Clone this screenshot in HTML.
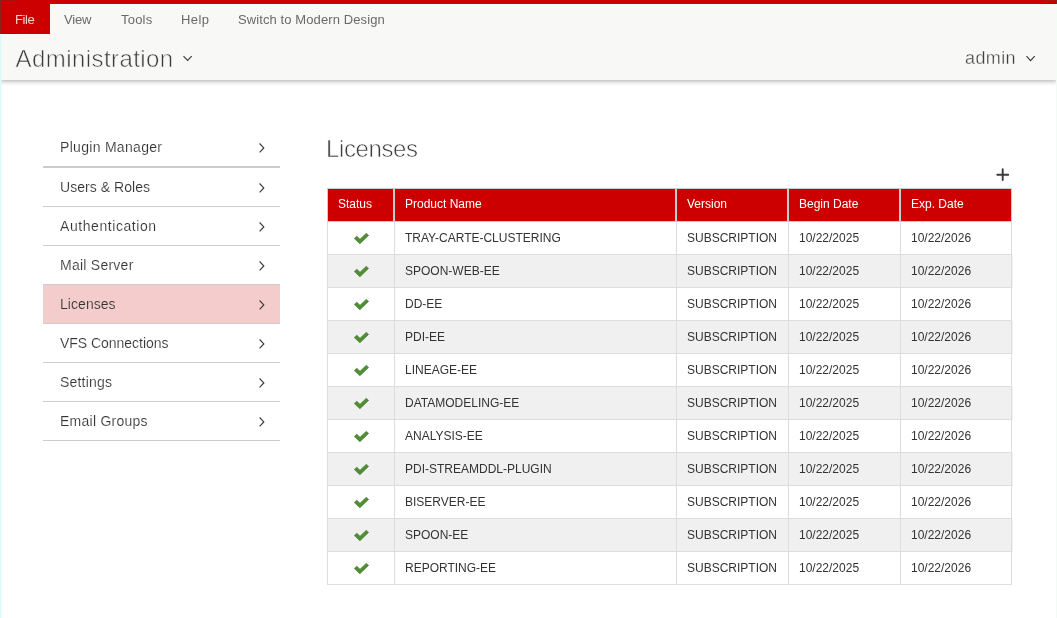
<!DOCTYPE html>
<html lang="en">
<head>
<meta charset="utf-8">
<title>Administration - Licenses</title>
<style>
html,body{margin:0;padding:0;}
body{width:1057px;height:618px;overflow:hidden;background:#fff;position:relative;font-family:"Liberation Sans",sans-serif;color:#333;}
*{box-sizing:border-box;}
.abs{position:absolute;white-space:nowrap;}
#page{position:absolute;left:0;top:0;width:1057px;height:618px;will-change:transform;}
#edge{left:0;top:35px;width:2px;height:583px;background:linear-gradient(90deg,#d6fbf8 0,#d6fbf8 1px,rgba(225,250,248,.35) 1px,rgba(225,250,248,.35) 2px);}
#redge{left:1056px;top:5px;width:1px;height:613px;background:#f3fcf4;}
#wline{left:0;top:4px;width:1057px;height:1px;background:#fdffff;}
.dk{background:#a81212;height:1px;}
.dkv{background:#8b2020;width:1px;}
#header{left:0;top:0;width:1057px;height:80px;background:#f8f8f6;border-top:4px solid #cc0000;box-shadow:0 1px 5px rgba(0,0,0,.35);}
#filetab{left:0;top:4px;width:51px;height:31px;background:#cc0000;border-right:1px solid #fff;border-bottom:1px solid #fff;}
.menu{top:11px;font-size:13px;line-height:18px;color:#6a6a6a;}
#m-file{left:15px;color:rgba(255,255,255,.82);letter-spacing:-.4px;}
#title{left:15.6px;top:41px;font-size:24px;line-height:36px;color:#3c3c3c;letter-spacing:.42px;-webkit-text-stroke:.6px #f8f8f6;}
#user{left:965px;top:45px;font-size:18px;line-height:26px;color:#404040;letter-spacing:.4px;-webkit-text-stroke:.35px #f8f8f6;}
.chev{fill:none;stroke:#3c3c3c;stroke-width:1.2;}
/* sidebar */
#side{left:43px;top:128px;width:237px;}
.item{position:relative;height:39px;border-bottom:1px solid #ccc;font-size:14px;line-height:38px;padding-left:17px;color:#333;-webkit-text-stroke:.15px #fff;}
.item.first{height:40px;border-bottom:2px solid #ccc;}
.item.sel{background:#f4cccc;-webkit-text-stroke-color:#f4cccc;}
.item svg{position:absolute;left:215px;top:13.6px;}
/* content */
#h1{left:326px;top:131px;font-size:24px;line-height:36px;color:#3c3c3c;letter-spacing:-.4px;-webkit-text-stroke:.6px #fff;}
#plus{left:996px;top:168px;}
#thead{left:327px;top:188px;width:685px;height:34px;display:flex;font-size:12px;}
#thead div{height:34px;background:#cc0000;color:#fff;border:1px solid #ccc;padding:0 0 1px 10px;line-height:31px;flex:none;}
table{position:absolute;left:327px;top:222px;border-collapse:separate;border-spacing:0;font-size:12px;table-layout:fixed;width:685px;border-left:1px solid #ddd;}
td{height:33px;padding:0 0 1px 10px;border-right:1px solid #ddd;border-bottom:1px solid #ddd;color:#333;}
tbody tr:nth-child(even) td{background:#f0f0f0;}
tbody tr:nth-child(even) td:last-child{box-shadow:1px 0 0 #f2f2f2;}
td.st{padding:0;}
td.st svg{display:block;margin:0 0 0 24px;}
</style>
</head>
<body>
<div id="page">
<div id="header" class="abs"></div>
<div id="wline" class="abs"></div>
<div id="filetab" class="abs"></div>
<div class="abs dk" style="left:0;top:0;width:17px"></div><div class="abs dk" style="left:0;top:33px;width:17px;background:#a80808"></div><div class="abs dkv" style="left:0;top:0;height:34px"></div>
<div class="abs dk" style="left:1044px;top:0;width:13px"></div><div class="abs dk" style="left:1044px;top:3px;width:13px;background:#a80808"></div><div class="abs dkv" style="left:1056px;top:0;height:4px"></div>
<div id="redge" class="abs"></div>
<span class="abs menu" id="m-file">File</span>
<span class="abs menu" style="left:64px;letter-spacing:-.2px">View</span>
<span class="abs menu" style="left:121px;letter-spacing:.2px">Tools</span>
<span class="abs menu" style="left:181px;letter-spacing:.4px">Help</span>
<span class="abs menu" style="left:238px;letter-spacing:.1px">Switch to Modern Design</span>
<div id="edge" class="abs"></div>
<span id="title" class="abs">Administration</span>
<svg class="abs" style="left:182px;top:54px" width="12" height="9" viewBox="0 0 12 9"><path class="chev" d="M1.5 2.2 L5.6 6.3 L9.7 2.2"/></svg>
<span id="user" class="abs">admin</span>
<svg class="abs" style="left:1025px;top:54px" width="12" height="9" viewBox="0 0 12 9"><path class="chev" d="M1.5 2.2 L5.6 6.6 L9.7 2.2"/></svg>

<div id="side" class="abs">
  <div class="item first" style="letter-spacing:0.3px">Plugin Manager<svg width="8" height="12" viewBox="0 0 8 12"><path class="chev" d="M1.6 1.5 L5.8 5.9 L1.6 10.3"/></svg></div>
  <div class="item" style="letter-spacing:0.05px">Users &amp; Roles<svg width="8" height="12" viewBox="0 0 8 12"><path class="chev" d="M1.6 1.5 L5.8 5.9 L1.6 10.3"/></svg></div>
  <div class="item" style="letter-spacing:0.57px">Authentication<svg width="8" height="12" viewBox="0 0 8 12"><path class="chev" d="M1.6 1.5 L5.8 5.9 L1.6 10.3"/></svg></div>
  <div class="item" style="letter-spacing:0.25px">Mail Server<svg width="8" height="12" viewBox="0 0 8 12"><path class="chev" d="M1.6 1.5 L5.8 5.9 L1.6 10.3"/></svg></div>
  <div class="item sel" style="letter-spacing:0.05px">Licenses<svg width="8" height="12" viewBox="0 0 8 12"><path class="chev" d="M1.6 1.5 L5.8 5.9 L1.6 10.3"/></svg></div>
  <div class="item" style="letter-spacing:-0.03px">VFS Connections<svg width="8" height="12" viewBox="0 0 8 12"><path class="chev" d="M1.6 1.5 L5.8 5.9 L1.6 10.3"/></svg></div>
  <div class="item" style="letter-spacing:0.2px">Settings<svg width="8" height="12" viewBox="0 0 8 12"><path class="chev" d="M1.6 1.5 L5.8 5.9 L1.6 10.3"/></svg></div>
  <div class="item" style="letter-spacing:0.25px">Email Groups<svg width="8" height="12" viewBox="0 0 8 12"><path class="chev" d="M1.6 1.5 L5.8 5.9 L1.6 10.3"/></svg></div>
</div>

<span id="h1" class="abs">Licenses</span>
<svg id="plus" class="abs" width="14" height="14" viewBox="0 0 14 14"><path d="M1.3 6.7 H12.2 M6.7 1.3 V12" stroke="#3a3a3a" stroke-width="1.9" stroke-linecap="round" fill="none"/></svg>

<div id="thead" class="abs"><div style="width:67px">Status</div><div style="width:282px">Product Name</div><div style="width:112px">Version</div><div style="width:112px">Begin Date</div><div style="width:112px">Exp. Date</div></div>
<table>
<colgroup><col style="width:67px"><col style="width:282px"><col style="width:112px"><col style="width:112px"><col style="width:111px"></colgroup>
<tbody>
<tr><td class="st"><svg width="18" height="14" viewBox="0 0 18 14"><path d="M2.3 7.5 L4.8 5.2 L8 8.3 L14.3 2.3 L16.6 4.4 L7.9 12.8 Z" fill="#508d36" stroke="#488531" stroke-width=".7" stroke-linejoin="round"/></svg></td><td>TRAY-CARTE-CLUSTERING</td><td>SUBSCRIPTION</td><td>10/22/2025</td><td>10/22/2026</td></tr>
<tr><td class="st"><svg width="18" height="14" viewBox="0 0 18 14"><path d="M2.3 7.5 L4.8 5.2 L8 8.3 L14.3 2.3 L16.6 4.4 L7.9 12.8 Z" fill="#508d36" stroke="#488531" stroke-width=".7" stroke-linejoin="round"/></svg></td><td>SPOON-WEB-EE</td><td>SUBSCRIPTION</td><td>10/22/2025</td><td>10/22/2026</td></tr>
<tr><td class="st"><svg width="18" height="14" viewBox="0 0 18 14"><path d="M2.3 7.5 L4.8 5.2 L8 8.3 L14.3 2.3 L16.6 4.4 L7.9 12.8 Z" fill="#508d36" stroke="#488531" stroke-width=".7" stroke-linejoin="round"/></svg></td><td>DD-EE</td><td>SUBSCRIPTION</td><td>10/22/2025</td><td>10/22/2026</td></tr>
<tr><td class="st"><svg width="18" height="14" viewBox="0 0 18 14"><path d="M2.3 7.5 L4.8 5.2 L8 8.3 L14.3 2.3 L16.6 4.4 L7.9 12.8 Z" fill="#508d36" stroke="#488531" stroke-width=".7" stroke-linejoin="round"/></svg></td><td>PDI-EE</td><td>SUBSCRIPTION</td><td>10/22/2025</td><td>10/22/2026</td></tr>
<tr><td class="st"><svg width="18" height="14" viewBox="0 0 18 14"><path d="M2.3 7.5 L4.8 5.2 L8 8.3 L14.3 2.3 L16.6 4.4 L7.9 12.8 Z" fill="#508d36" stroke="#488531" stroke-width=".7" stroke-linejoin="round"/></svg></td><td>LINEAGE-EE</td><td>SUBSCRIPTION</td><td>10/22/2025</td><td>10/22/2026</td></tr>
<tr><td class="st"><svg width="18" height="14" viewBox="0 0 18 14"><path d="M2.3 7.5 L4.8 5.2 L8 8.3 L14.3 2.3 L16.6 4.4 L7.9 12.8 Z" fill="#508d36" stroke="#488531" stroke-width=".7" stroke-linejoin="round"/></svg></td><td>DATAMODELING-EE</td><td>SUBSCRIPTION</td><td>10/22/2025</td><td>10/22/2026</td></tr>
<tr><td class="st"><svg width="18" height="14" viewBox="0 0 18 14"><path d="M2.3 7.5 L4.8 5.2 L8 8.3 L14.3 2.3 L16.6 4.4 L7.9 12.8 Z" fill="#508d36" stroke="#488531" stroke-width=".7" stroke-linejoin="round"/></svg></td><td>ANALYSIS-EE</td><td>SUBSCRIPTION</td><td>10/22/2025</td><td>10/22/2026</td></tr>
<tr><td class="st"><svg width="18" height="14" viewBox="0 0 18 14"><path d="M2.3 7.5 L4.8 5.2 L8 8.3 L14.3 2.3 L16.6 4.4 L7.9 12.8 Z" fill="#508d36" stroke="#488531" stroke-width=".7" stroke-linejoin="round"/></svg></td><td>PDI-STREAMDDL-PLUGIN</td><td>SUBSCRIPTION</td><td>10/22/2025</td><td>10/22/2026</td></tr>
<tr><td class="st"><svg width="18" height="14" viewBox="0 0 18 14"><path d="M2.3 7.5 L4.8 5.2 L8 8.3 L14.3 2.3 L16.6 4.4 L7.9 12.8 Z" fill="#508d36" stroke="#488531" stroke-width=".7" stroke-linejoin="round"/></svg></td><td>BISERVER-EE</td><td>SUBSCRIPTION</td><td>10/22/2025</td><td>10/22/2026</td></tr>
<tr><td class="st"><svg width="18" height="14" viewBox="0 0 18 14"><path d="M2.3 7.5 L4.8 5.2 L8 8.3 L14.3 2.3 L16.6 4.4 L7.9 12.8 Z" fill="#508d36" stroke="#488531" stroke-width=".7" stroke-linejoin="round"/></svg></td><td>SPOON-EE</td><td>SUBSCRIPTION</td><td>10/22/2025</td><td>10/22/2026</td></tr>
<tr><td class="st"><svg width="18" height="14" viewBox="0 0 18 14"><path d="M2.3 7.5 L4.8 5.2 L8 8.3 L14.3 2.3 L16.6 4.4 L7.9 12.8 Z" fill="#508d36" stroke="#488531" stroke-width=".7" stroke-linejoin="round"/></svg></td><td>REPORTING-EE</td><td>SUBSCRIPTION</td><td>10/22/2025</td><td>10/22/2026</td></tr>
</tbody>
</table>
</div>
</body>
</html>
